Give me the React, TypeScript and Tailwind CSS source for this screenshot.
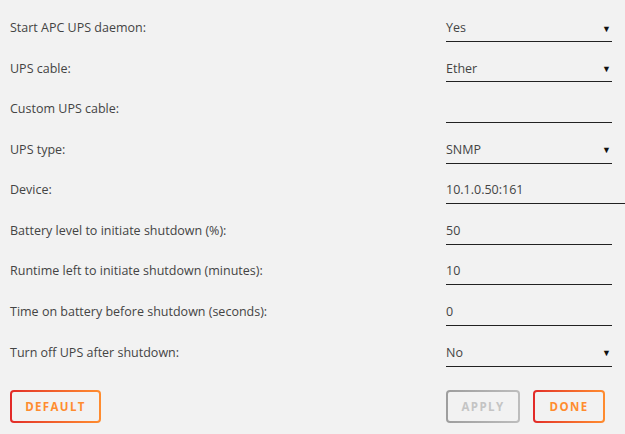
import React from 'react';

type Row = { label: string; value: string; select?: boolean; wide?: boolean };

const rows: Row[] = [
  { label: 'Start APC UPS daemon:', value: 'Yes', select: true },
  { label: 'UPS cable:', value: 'Ether', select: true },
  { label: 'Custom UPS cable:', value: '' },
  { label: 'UPS type:', value: 'SNMP', select: true },
  { label: 'Device:', value: '10.1.0.50:161', wide: true },
  { label: 'Battery level to initiate shutdown (%):', value: '50' },
  { label: 'Runtime left to initiate shutdown (minutes):', value: '10' },
  { label: 'Time on battery before shutdown (seconds):', value: '0' },
  { label: 'Turn off UPS after shutdown:', value: 'No', select: true },
];

function GradButton({ label, width, disabled }: { label: string; width: string; disabled?: boolean }) {
  return (
    <div
      className={
        'rounded-[4px] p-[2px] ' +
        (disabled ? 'bg-linear-to-r from-[#9e9e9e] to-[#bdbdbd]' : 'bg-linear-to-r from-[#e22828] to-[#ff8c2f]')
      }
    >
      <div
        className={
          'flex h-[29px] items-center justify-center rounded-[2px] bg-[#f2f2f2] text-[11.5px] font-bold tracking-[0.12em] ' +
          width +
          (disabled ? ' text-[#c4c4c4]' : ' text-[#ff8c2f]')
        }
      >
        {label}
      </div>
    </div>
  );
}

export default function App() {
  return (
    <div className="h-[434px] w-[625px] overflow-hidden bg-[#f2f2f2] font-['Open_Sans',sans-serif] text-[12.5px] text-[#444]">
      <div className="pt-[7px]">
        {rows.map(r => (
          <div key={r.label} className="flex h-[40.6px] items-center">
            <div className="w-[446px] shrink-0 pl-[10px] pt-[2px]">{r.label}</div>
            <div
              className={
                'flex h-[29px] shrink-0 items-center justify-between border-b border-[#222] pt-[3px] ' +
                (r.wide ? 'w-[300px]' : 'w-[166px]')
              }
            >
              <span>{r.value}</span>
              {r.select && <span className="pr-[1px] text-[9px] text-[#111]">▼</span>}
            </div>
          </div>
        ))}
      </div>
      <div className="mt-[18px] flex items-center pl-[10px]">
        <GradButton label="DEFAULT" width="w-[87px]" />
        <div className="ml-[345px] flex gap-[13px]">
          <GradButton label="APPLY" width="w-[70px]" disabled />
          <GradButton label="DONE" width="w-[68px]" />
        </div>
      </div>
    </div>
  );
}
